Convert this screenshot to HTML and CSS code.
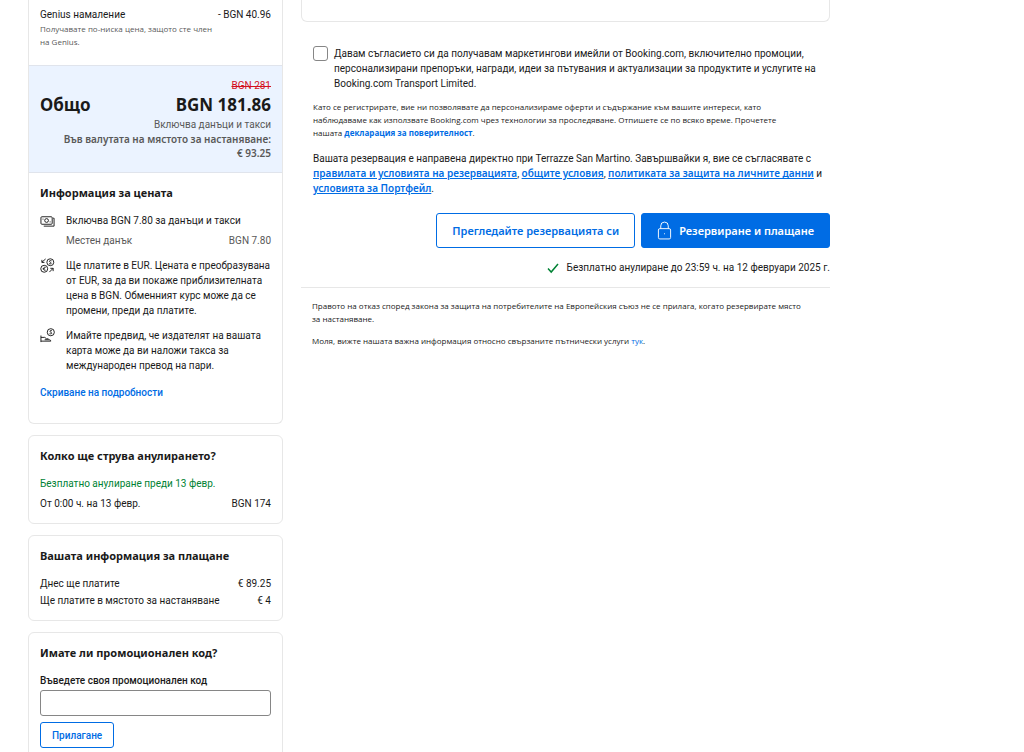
FILE: index.html
```html
<!DOCTYPE html>
<html lang="bg">
<head>
<meta charset="utf-8">
<meta name="viewport" content="width=device-width, initial-scale=1">
<title>Booking.com</title>
<link rel="stylesheet" href="styles.css">
</head>
<body>
<div class="page">
  <aside class="sidebar">
    <section class="card price-card">
      <div class="discount">
        <div class="row"><span>Genius намаление</span><span>- BGN 40.96</span></div>
        <p class="hint">Получавате по-ниска цена, защото сте член на Genius.</p>
      </div>
      <div class="total">
        <s class="old-price">BGN 281</s>
        <div class="row total-line"><strong>Общо</strong><strong>BGN 181.86</strong></div>
        <p>Включва данъци и такси</p>
        <p class="local">Във валутата на мястото за настаняване:<br>€ 93.25</p>
      </div>
      <div class="info">
        <h2>Информация за цената</h2>
        <ul class="info-list">
          <li>
            <svg class="icon" viewBox="0 0 16 16" aria-hidden="true"><rect x="1" y="4" width="12" height="8" rx="1"/><circle cx="7" cy="8" r="2"/><path d="M3.2 6v1M10.8 9v1M14 5.5h1V14H4"/></svg>
            <div>
              <p>Включва BGN 7.80 за данъци и такси</p>
              <div class="row tax"><span>Местен данък</span><span>BGN 7.80</span></div>
            </div>
          </li>
          <li>
            <svg class="icon" viewBox="0 0 16 16" aria-hidden="true"><circle cx="11" cy="4.5" r="3.7"/><circle cx="4.5" cy="11.5" r="3.7"/><path d="M12.3 3c-2.4-1-3 .9-1.3 1.5s1.2 2.4-1.3 1.5M6 10c-3-1-3 4 0 3M2.8 11.5h2.4M6 1 2 4.5M2 2v2.7h2.7M10 15l4-4M11 11h3v3"/></svg>
            <p>Ще платите в EUR. Цената е преобразувана от EUR, за да ви покаже приблизителната цена в BGN. Обменният курс може да се промени, преди да платите.</p>
          </li>
          <li>
            <svg class="icon" viewBox="0 0 16 16" aria-hidden="true"><circle cx="11.5" cy="4.5" r="3.8"/><path d="M12.8 3c-2.4-1-3 .9-1.3 1.5s1.2 2.4-1.3 1.5M1 8v7M1 10h4l2 1.5h2M1 14h10.5c0-1.5-1.5-1.5-3-1.5H5"/></svg>
            <p>Имайте предвид, че издателят на вашата карта може да ви наложи такса за международен превод на пари.</p>
          </li>
        </ul>
        <a class="details" href="#">Скриване на подробности</a>
      </div>
    </section>

    <section class="card">
      <h2>Колко ще струва анулирането?</h2>
      <p class="free">Безплатно анулиране преди 13 февр.</p>
      <div class="row"><span>От 0:00 ч. на 13 февр.</span><span>BGN 174</span></div>
    </section>

    <section class="card payments">
      <h2>Вашата информация за плащане</h2>
      <div class="row"><span>Днес ще платите</span><span>€ 89.25</span></div>
      <div class="row"><span>Ще платите в мястото за настаняване</span><span>€ 4</span></div>
    </section>

    <section class="card">
      <h2>Имате ли промоционален код?</h2>
      <form class="promo">
        <label for="promo">Въведете своя промоционален код</label>
        <input id="promo" type="text">
        <button class="button outline small" type="button">Прилагане</button>
      </form>
    </section>
  </aside>

  <main class="main">
    <div class="panel"></div>
    <div class="terms">
      <div class="consent">
        <input id="consent" type="checkbox">
        <label for="consent">Давам съгласието си да получавам маркетингови имейли от Booking.com, включително промоции,<br>персонализирани препоръки, награди, идеи за пътувания и актуализации за продуктите и услугите на<br>Booking.com Transport Limited.</label>
      </div>
      <p class="fine">Като се регистрирате, вие ни позволявате да персонализираме оферти и съдържание към вашите интереси, като<br>наблюдаваме как използвате Booking.com чрез технологии за проследяване. Отпишете се по всяко време. Прочетете<br>нашата <a href="#">декларация за поверителност</a>.</p>
      <p class="agreement">Вашата резервация е направена директно при Terrazze San Martino. Завършвайки я, вие се съгласявате с<br><a href="#">правилата и условията на резервацията</a>, <a href="#">общите условия</a>, <a href="#">политиката за защита на личните данни</a> и<br><a href="#">условията за Портфейл</a>.</p>
    </div>
    <div class="actions">
      <button class="button outline" type="button">Прегледайте резервацията си</button>
      <button class="button primary" type="button">
        <svg class="lock" viewBox="0 0 16 20" aria-hidden="true"><rect x="1.5" y="8" width="13" height="11" rx="1.5"/><path d="M4 8V5a4 4 0 0 1 8 0v3M8 13v1"/></svg>
        Резервиране и плащане
      </button>
    </div>
    <p class="cancel">
      <svg class="check" viewBox="0 0 12 12" aria-hidden="true"><path d="M1 6.5 4.2 10 11 2"/></svg>
      Безплатно анулиране до 23:59 ч. на 12 февруари 2025 г.
    </p>
    <footer class="legal">
      <p>Правото на отказ според закона за защита на потребителите на Европейския съюз не се прилага, когато резервирате място<br>за настаняване.</p>
      <p>Моля, вижте нашата важна информация относно свързаните пътнически услуги <a href="#">тук</a>.</p>
    </footer>
  </main>
</div>
</body>
</html>
```
FILE: styles.css
```css
* { box-sizing: border-box; }

body {
  margin: 0;
  background: #fff;
  color: #1a1a1a;
  font: 10px/15px Roboto, "Noto Sans", sans-serif;
}

p, h2, ul { margin: 0; padding: 0; }
ul { list-style: none; }
a { color: #006ce4; text-decoration: none; }

.page {
  display: grid;
  grid-template-columns: 255px minmax(0, 1fr);
  gap: 18px;
  max-width: 830px;
  padding-left: 28px;
}

.sidebar { display: flex; flex-direction: column; gap: 11px; }

.card {
  padding: 12px 11px;
  border: 1px solid #e7e7e7;
  border-radius: 6px;
}

.price-card {
  padding: 0;
  border-top: 0;
  border-radius: 0 0 6px 6px;
}

h2 { font: 700 11px/16px "Noto Sans", sans-serif; margin-bottom: 12px; }

.row { display: flex; justify-content: space-between; gap: 8px; }

.discount { padding: 7px 11px 17px; }
.hint { max-width: 180px; color: #595959; font: 8px/13px "Open Sans", sans-serif; }

.total {
  padding: 12px 11px;
  background: #ebf3ff;
  border-top: 1px solid #e0e4ec;
  border-bottom: 1px solid #e0e4ec;
  color: #595959;
  text-align: right;
}
.old-price { display: block; color: #d4111e; }
.total-line { color: #1a1a1a; font: 17px/24px "Noto Sans", sans-serif; }
.local { font: 600 10px/14px "Noto Sans", sans-serif; }

.info { padding: 12px 11px 23px; }
.info-list { display: grid; gap: 10px; }
.info-list li { display: grid; grid-template-columns: 15px minmax(0, 1fr); gap: 11px; }
.icon { width: 15px; height: 15px; fill: none; stroke: #1a1a1a; stroke-width: 1; }
.tax { margin-top: 5px; color: #595959; }
.details { display: inline-block; margin-top: 12px; font-weight: 500; }

.free { margin-bottom: 5px; color: #008234; }

.payments .row + .row { margin-top: 2px; }

.promo { display: flex; flex-direction: column; align-items: flex-start; }
.promo label { font-weight: 500; margin-bottom: 2px; }
.promo input {
  width: 100%;
  height: 26px;
  margin-bottom: 6px;
  padding: 0 6px;
  border: 1px solid #868686;
  border-radius: 3px;
  font: inherit;
}

.button {
  display: flex;
  align-items: center;
  justify-content: center;
  height: 35px;
  padding: 0 15px;
  border: 1px solid #006ce4;
  border-radius: 3px;
  font: 600 11px/16px "Noto Sans", sans-serif;
}
.outline { background: #fff; color: #006ce4; }
.primary { gap: 7px; background: #006ce4; color: #fff; }
.small { height: 26px; padding: 0 11px; font: 500 10px/15px Roboto, "Noto Sans", sans-serif; }

.panel { height: 22px; border: 1px solid #e7e7e7; border-top: 0; border-radius: 0 0 6px 6px; }

.terms { padding: 24px 0 0 12px; }
.consent { display: flex; gap: 6px; }
.consent input {
  appearance: none;
  flex: none;
  width: 15px;
  height: 15px;
  margin: 0;
  border: 1px solid #868686;
  border-radius: 3px;
}
.fine { margin-top: 9px; font: 8px/13px "Open Sans", sans-serif; }
.fine a { font-weight: 700; }
.agreement { margin-top: 12px; }
.agreement a { font-family: "Noto Sans", sans-serif; font-weight: 600; text-decoration: underline; }

.actions { display: flex; justify-content: flex-end; gap: 6px; margin-top: 17px; }
.lock { width: 15px; height: 19px; fill: none; stroke: #fff; stroke-width: 1; }

.cancel { display: flex; justify-content: flex-end; align-items: center; gap: 8px; margin-top: 12px; }
.check { width: 12px; height: 12px; fill: none; stroke: #008234; stroke-width: 1.5; }

.legal {
  margin-top: 12px;
  padding: 11px;
  border-top: 1px solid #e7e7e7;
  font: 8px/13px "Open Sans", sans-serif;
}
.legal p + p { margin-top: 9px; }
```
